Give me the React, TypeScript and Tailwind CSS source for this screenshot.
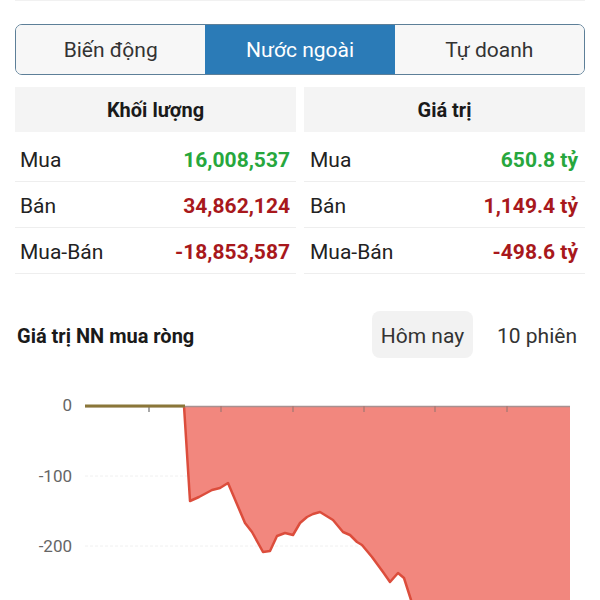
import React from "react";

const rows = [
  { label: "Mua", vol: "16,008,537", val: "650.8 tỷ", color: "text-[#27a73d]" },
  { label: "Bán", vol: "34,862,124", val: "1,149.4 tỷ", color: "text-[#a8181c]" },
  { label: "Mua-Bán", vol: "-18,853,587", val: "-498.6 tỷ", color: "text-[#a8181c]" },
];

const curve =
  "184,406 190,501 199,497 212,490 220,488 228,483 245,523 252,532 263,552 270,551 277,536 285,533 293,535 300,523 307,517 313,514 320,512 333,520 343,532 350,535 357,542 362,545 372,557 383,572 390,582 398,573 404,578 411,600 416,620";

export default function App() {
  return (
    <div className="w-[600px] h-[600px] overflow-hidden bg-white font-['Roboto',sans-serif] text-[#222]">
      <div className="mx-[15px] h-px bg-[#f1f1f1]" />
      <div className="mx-[15px] mt-[23px] flex h-[51px] overflow-hidden rounded-[7px] border border-[#5d7f98] text-[21px]">
        <div className="flex flex-1 items-center justify-center bg-[#f7f7f7] pt-[3px] text-[#333]">Biến động</div>
        <div className="flex flex-1 items-center justify-center bg-[#2b7bb7] pt-[3px] text-white">Nước ngoài</div>
        <div className="flex flex-1 items-center justify-center bg-[#f7f7f7] pt-[3px] text-[#333]">Tự doanh</div>
      </div>
      <div className="mx-[15px] mt-[12px] flex gap-[8px]">
        {[0, 1].map((col) => (
          <div key={col} className="flex-1">
            <div className="flex h-[45px] items-center justify-center bg-[#f4f4f4] pt-[1px] text-[20px] font-bold text-[#1a1a1a]">
              {col === 0 ? "Khối lượng" : "Giá trị"}
            </div>
            <div className="mt-[4px]">
              {rows.map((r) => (
                <div
                  key={r.label}
                  className={`flex h-[46px] items-center justify-between border-b border-[#eeeeee] pt-[5px] text-[21px] ${
                    col === 0 ? "pl-[5px] pr-[6px]" : "pl-[6px] pr-[7px]"
                  }`}
                >
                  <span className="text-[#222]">{r.label}</span>
                  <span className={`font-bold ${r.color}`}>{col === 0 ? r.vol : r.val}</span>
                </div>
              ))}
            </div>
          </div>
        ))}
      </div>
      <div className="mt-[37px] flex h-[47px] items-center pl-[17px] pr-[23px]">
        <div className="flex-1 pt-[3px] text-[20px] font-bold text-[#1a1a1a]">Giá trị NN mua ròng</div>
        <div className="flex h-[47px] w-[101px] items-center justify-center rounded-[8px] bg-[#f2f2f2] pt-[4px] text-[21px] text-[#333]">
          Hôm nay
        </div>
        <div className="ml-[24px] pt-[4px] text-[21px] text-[#333]">10 phiên</div>
      </div>
      <svg className="mt-[22px] block" width="600" height="240" viewBox="0 380 600 240">
        <line x1="85" y1="476" x2="570" y2="476" stroke="#f0f0f0" strokeWidth="1" strokeDasharray="3 2" />
        <line x1="85" y1="546" x2="570" y2="546" stroke="#f0f0f0" strokeWidth="1" strokeDasharray="3 2" />
        <polygon points={`${curve} 416,640 570,640 570,406`} fill="#f2877e" />
        <polyline points={curve} fill="none" stroke="#dc4d3c" strokeWidth="2.5" strokeLinejoin="round" />
        <line x1="85" y1="406.5" x2="570" y2="406.5" stroke="#a89090" strokeWidth="1.5" />
        {[149, 221, 293, 364, 435, 507].map((x) => (
          <line key={x} x1={x} y1="406" x2={x} y2="412" stroke={x < 184 ? "#8d8d8d" : "#b07a74"} strokeWidth="1.5" />
        ))}
        <line x1="85" y1="406" x2="185" y2="406" stroke="#8a7639" strokeWidth="3" />
        <g fontFamily="Roboto, sans-serif" fontSize="17" fill="#666" textAnchor="end">
          <text x="72" y="411">0</text>
          <text x="72" y="482">-100</text>
          <text x="72" y="552">-200</text>
        </g>
      </svg>
    </div>
  );
}
